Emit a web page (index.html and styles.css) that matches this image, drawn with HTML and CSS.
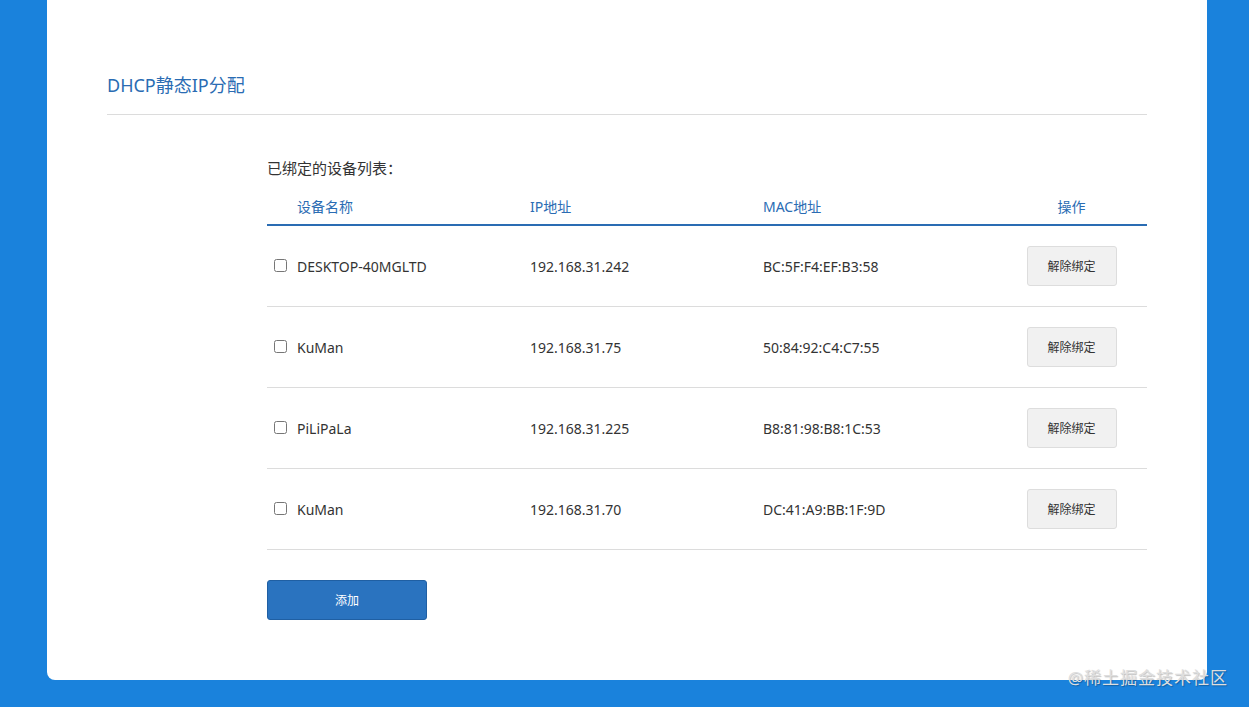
FILE: index.html
```html
<!DOCTYPE html>
<html>
	<head>
		<meta charset="utf-8">
		<title>DHCP静态IP分配</title>
		<link rel="stylesheet" href="styles.css">
	</head>
	<body>
		<div class="page">
			<div class="panel">
				<h2 class="panel_title">DHCP静态IP分配</h2>
				<div class="bind">
					<p class="bind_label">已绑定的设备列表：</p>
					<div class="bind_table">
						<div class="bind_row bind_row--head">
							<div class="col col-name">设备名称</div>
							<div class="col">IP地址</div>
							<div class="col">MAC地址</div>
							<div class="col col-act">操作</div>
						</div>
						<div class="bind_row">
							<div class="col col-name"><input type="checkbox"><span>DESKTOP-40MGLTD</span></div>
							<div class="col">192.168.31.242</div>
							<div class="col">BC:5F:F4:EF:B3:58</div>
							<div class="col col-act"><button type="button" class="btn_unbind">解除绑定</button></div>
						</div>
						<div class="bind_row">
							<div class="col col-name"><input type="checkbox"><span>KuMan</span></div>
							<div class="col">192.168.31.75</div>
							<div class="col">50:84:92:C4:C7:55</div>
							<div class="col col-act"><button type="button" class="btn_unbind">解除绑定</button></div>
						</div>
						<div class="bind_row">
							<div class="col col-name"><input type="checkbox"><span>PiLiPaLa</span></div>
							<div class="col">192.168.31.225</div>
							<div class="col">B8:81:98:B8:1C:53</div>
							<div class="col col-act"><button type="button" class="btn_unbind">解除绑定</button></div>
						</div>
						<div class="bind_row">
							<div class="col col-name"><input type="checkbox"><span>KuMan</span></div>
							<div class="col">192.168.31.70</div>
							<div class="col">DC:41:A9:BB:1F:9D</div>
							<div class="col col-act"><button type="button" class="btn_unbind">解除绑定</button></div>
						</div>
					</div>
					<button type="button" class="btn_add">添加</button>
				</div>
			</div>
			<div class="watermark">@稀土掘金技术社区</div>
		</div>
	</body>
</html>
```

FILE: styles.css
```css
html,body{ margin:0; padding:0; }
body{ background:#1a82dc; font-family:"Segoe UI","Noto Sans","Noto Sans CJK SC",sans-serif; color:#333; }
p,h2{ margin:0; padding:0; }
.page{ position:relative; height:707px; padding:0 42px 0 47px; overflow:hidden; }
.panel{ height:680px; background:#fff; border-radius:0 0 8px 8px; padding:0 60px; box-sizing:border-box; }
.panel_title{ padding-top:72px; height:42px; border-bottom:1px solid #dcdcdc; font-size:18px; font-weight:normal; line-height:26px; color:#2a6cb3; }
.bind{ padding:44px 0 0 160px; }
.bind_label{ font-size:15px; line-height:18px; color:#333; }
.bind_table{ margin-top:15px; }
.bind_row{ display:grid; grid-template-columns:263px 233px 233px 1fr; height:80px; align-items:center; border-bottom:1px solid #dcdcdc; font-size:14px; color:#333; }
.bind_row--head{ height:26px; padding-top:6px; align-items:start; border-bottom:2px solid #2a6cb3; color:#2a6cb3; font-size:14px; line-height:18px; }
.col-name{ display:flex; align-items:center; padding-left:30px; position:relative; }
.col-name input{ position:absolute; left:7px; top:50%; margin:-7px 0 0 0; width:13px; height:13px; }
.col-act{ text-align:center; }
.btn_unbind{ width:90px; height:40px; border:1px solid #ddd; border-radius:3px; background:#f1f1f1; color:#333; font-size:12px; font-family:inherit; }
.btn_add{ display:block; margin-top:30px; width:160px; height:40px; border:1px solid #1f5fa3; border-radius:3px; background:#2a73bf; color:#fff; font-size:12px; font-family:inherit; }
.watermark{ position:absolute; right:21px; top:664px; font-size:17px; color:#dedede; text-shadow:1px 1px 1px rgba(0,0,0,0.25); letter-spacing:1px; }
```
